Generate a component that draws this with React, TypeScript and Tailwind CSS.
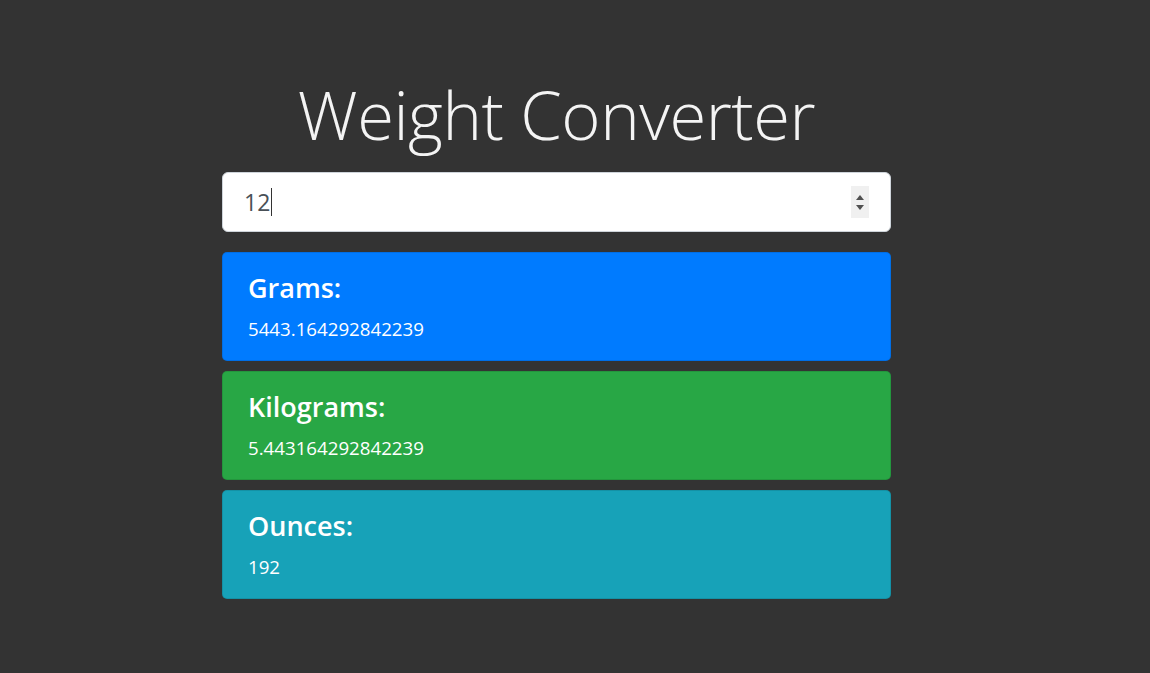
import React from "react";

const results = [
  { label: "Grams:", value: "5443.164292842239", bg: "bg-[#007bff]" },
  { label: "Kilograms:", value: "5.443164292842239", bg: "bg-[#28a745]" },
  { label: "Ounces:", value: "192", bg: "bg-[#17a2b8]" },
];

export default function App() {
  return (
    <div
      className="min-h-[673px] bg-[#333333] text-white"
      style={{ fontFamily: "'Open Sans', 'Noto Sans', sans-serif" }}
    >
      <div className="ml-[222px] w-[669px] pt-[72px]">
        <h1 className="text-center text-[67px] font-light leading-[84px] tracking-[-0.5px] text-[#f4f4f4]">
          Weight Converter
        </h1>

        <div className="mt-[16px] flex h-[60px] items-center rounded-[6px] border border-[#ced4da] bg-white pl-[21px] pr-[21px]">
          <span className="text-[23px] leading-none text-[#495057]">12</span>
          <span className="ml-[1px] h-[28px] w-[1px] bg-[#333]" />
          <div className="ml-auto flex h-[32px] w-[18px] flex-col items-center justify-center gap-[5px] bg-[#f0f0f0]">
            <svg width="8" height="5" viewBox="0 0 8 5">
              <path d="M0 5 L4 0 L8 5 Z" fill="#505050" />
            </svg>
            <svg width="8" height="5" viewBox="0 0 8 5">
              <path d="M0 0 L8 0 L4 5 Z" fill="#505050" />
            </svg>
          </div>
        </div>

        <div className="mt-[20px] flex flex-col gap-[10px]">
          {results.map((r) => (
            <div
              key={r.label}
              className={`${r.bg} h-[109px] rounded-[5px] border border-black/10 px-[25px] pt-[17px]`}
            >
              <h4 className="text-[27px] font-semibold leading-[36px]">{r.label}</h4>
              <p className="mt-[11px] text-[18.7px] leading-[24px]">{r.value}</p>
            </div>
          ))}
        </div>
      </div>
    </div>
  );
}
